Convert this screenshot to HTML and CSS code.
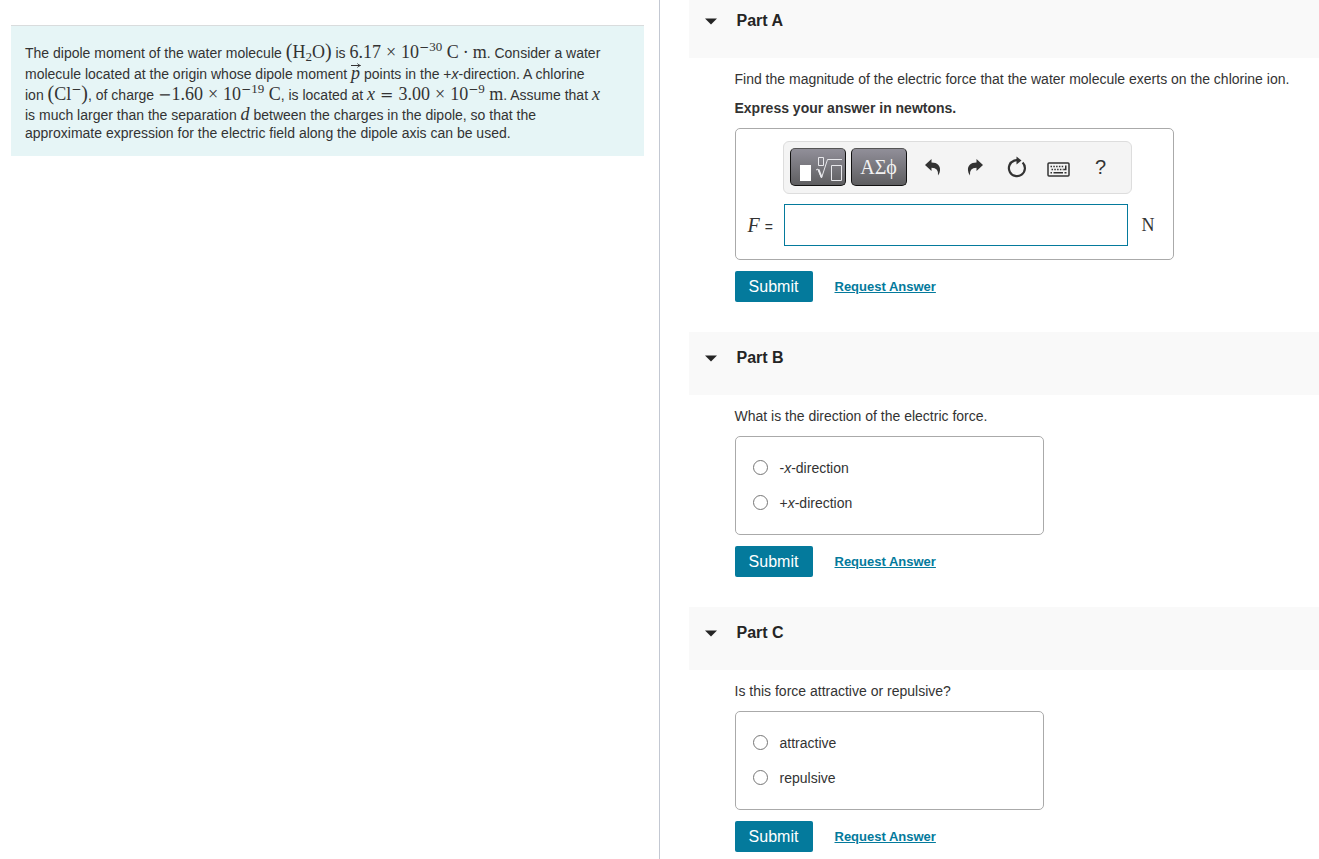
FILE: index.html
```html
<!DOCTYPE html>
<html lang="en">
<head>
<meta charset="utf-8">
<title>Dipole Moment of Water</title>
<link rel="stylesheet" href="styles.css">
</head>
<body>
<div class="layout">
  <section class="intro-pane">
    <p class="problem">The dipole moment of the water molecule <span class="math"><span class="paren">(</span>H<sub>2</sub>O<span class="paren">)</span></span> is <span class="math">6.17<span class="op">×</span>10<sup><span class="neg">−</span>30</sup> C<span class="dot">·</span>m</span>. Consider a water<br>
    molecule located at the origin whose dipole moment <span class="math vec"><i>p</i><svg class="arrow" viewBox="0 0 10 5" aria-hidden="true"><path d="M0 2.5H9M6.5 0.5Q7.5 2.3 9.5 2.5Q7.5 2.7 6.5 4.5"/></svg></span> points in the +<i>x</i>-direction. A chlorine<br>
    ion <span class="math"><span class="paren">(</span>Cl<sup><span class="neg">−</span></sup><span class="paren">)</span></span>, of charge <span class="math"><span class="neg">−</span>1.60<span class="op">×</span>10<sup><span class="neg">−</span>19</sup> C</span>, is located at <span class="math"><i>x</i><span class="op wide">=</span>3.00<span class="op">×</span>10<sup><span class="neg">−</span>9</sup> m</span>. Assume that <span class="math"><i>x</i></span><br>
    is much larger than the separation <span class="math small-line"><i>d</i></span> between the charges in the dipole, so that the<br>
    approximate expression for the electric field along the dipole axis can be used.</p>
  </section>
  <main class="parts">
    <section class="part">
      <header class="part-head"><svg class="caret" viewBox="0 0 12 7" aria-hidden="true"><path d="M0 0.5H12L6 6.5Z"/></svg><h2>Part A</h2></header>
      <div class="part-body">
        <p class="prompt">Find the magnitude of the electric force that the water molecule exerts on the chlorine ion.</p>
        <p class="prompt strong">Express your answer in newtons.</p>
        <div class="box answer">
          <div class="toolbar">
            <button class="tool dark" type="button" aria-label="Templates"><svg width="50" height="28" viewBox="0 0 50 28"><path d="M7 12h11v16H7z" fill="#fff"/><g fill="none" stroke="#e8e8ec"><path d="M25.500 4.500h5v8h-5zM38.500 12.500h10v15h-10z"/><path d="M23 17l2-1 3.500 9L34.500 6.500H49"/><path d="M25.500 16.500l3 7.500" stroke-width="2"/></g></svg></button>
            <button class="tool dark greek" type="button">ΑΣϕ</button>
            <div class="icons">
              <button class="tool" type="button" aria-label="Undo"><svg width="18" height="18" viewBox="0 0 18 18"><path d="M1 7L7.500 1V4.500C13.500 4.500 16.500 8 16 12.500Q15.800 15.500 14 17.500Q15 10 7.500 9.800V13Z"/></svg></button>
              <button class="tool" type="button" aria-label="Redo"><svg width="18" height="18" viewBox="0 0 18 18"><path d="M17 7L10.500 1V4.500C4.500 4.500 1.500 8 2 12.500Q2.200 15.500 4 17.500Q3 10 10.500 9.800V13Z"/></svg></button>
              <button class="tool" type="button" aria-label="Reset"><svg width="20" height="22" viewBox="0 0 20 22"><path d="M15.600 6.500A8 8 0 1 1 7.200 4.600L11 3.800" fill="none" stroke="#333" stroke-width="2.200"/><path d="M9.500 0.500L14.500 4.500L9.500 8.500Z"/></svg></button>
              <button class="tool" type="button" aria-label="Keyboard shortcuts"><svg class="keyboard" width="23" height="15" viewBox="0 0 23 15"><rect x="1" y="1" width="21" height="13" rx="1" fill="none" stroke="#333" stroke-width="1.500"/><path d="M3.500 4.500h14M4.500 7.500h12" fill="none" stroke="#333" stroke-width="1.500" stroke-dasharray="1.500 1.300"/><path d="M18 3.500h1.500V8.200H16.500V6.800H18ZM3.500 10h1.500v1.500H3.500zM6.500 10h9.500v1.500H6.500zM17.500 10h2v1.500h-2z"/></svg></button>
              <button class="tool help" type="button" aria-label="Help">?</button>
            </div>
          </div>
          <div class="entry">
            <label for="force"><i>F</i> <span class="eq">=</span></label>
            <input id="force" class="field" type="text">
            <span class="unit">N</span>
          </div>
        </div>
        <div class="actions"><button class="submit" type="button">Submit</button><a href="#">Request Answer</a></div>
      </div>
    </section>
    <section class="part">
      <header class="part-head"><svg class="caret" viewBox="0 0 12 7" aria-hidden="true"><path d="M0 0.5H12L6 6.5Z"/></svg><h2>Part B</h2></header>
      <div class="part-body">
        <p class="prompt">What is the direction of the electric force.</p>
        <div class="box choices">
          <label class="choice"><input type="radio" name="direction"><span>-<i>x</i>-direction</span></label>
          <label class="choice"><input type="radio" name="direction"><span>+<i>x</i>-direction</span></label>
        </div>
        <div class="actions"><button class="submit" type="button">Submit</button><a href="#">Request Answer</a></div>
      </div>
    </section>
    <section class="part">
      <header class="part-head"><svg class="caret" viewBox="0 0 12 7" aria-hidden="true"><path d="M0 0.5H12L6 6.5Z"/></svg><h2>Part C</h2></header>
      <div class="part-body">
        <p class="prompt">Is this force attractive or repulsive?</p>
        <div class="box choices">
          <label class="choice"><input type="radio" name="kind"><span>attractive</span></label>
          <label class="choice"><input type="radio" name="kind"><span>repulsive</span></label>
        </div>
        <div class="actions"><button class="submit" type="button">Submit</button><a href="#">Request Answer</a></div>
      </div>
    </section>
  </main>
</div>
</body>
</html>
```
FILE: styles.css
```css
* { box-sizing: border-box; }

body {
  margin: 0;
  background: #fff;
  color: #333;
  font: 14px/18px "Liberation Sans", Arial, sans-serif;
}

h2, p { margin: 0; }

.layout {
  display: grid;
  grid-template-columns: 1fr 1fr;
  min-height: 100vh;
}

.intro-pane {
  padding: 25px 15px 0 11px;
  border-right: 1px solid #c3c8d2;
}

.problem {
  padding: 16px 10px 14px 14px;
  border-top: 1px solid #d9dcdd;
  background: #e6f5f6;
}

/* Inline formulas */
.math {
  font-family: "Liberation Serif", "Times New Roman", serif;
  font-size: 18px;
  line-height: 21px;
  white-space: nowrap;
}
.small-line { line-height: 18px; }
.math sup, .math sub { font-size: 13px; line-height: 0; }
.math sup { vertical-align: 7px; }
.math sub { vertical-align: -3px; }
.paren { font-size: 20px; line-height: 0; }
.op { margin: 0 5px; }
.wide, .neg { font-family: "DejaVu Serif", serif; font-size: 16px; line-height: 0; }
.math sup .neg { font-size: 12px; }
.dot { margin: 0 4px; }
.vec { position: relative; }
.arrow {
  position: absolute;
  left: 0;
  top: 0;
  width: 10px;
  height: 5px;
  fill: none;
  stroke: #333;
}

/* Question parts */
.parts { padding-left: 29px; min-width: 0; }

.part-head {
  display: flex;
  align-items: center;
  gap: 20px;
  padding: 16px 16px 27px;
  background: #f9f9f9;
}
.part:first-child .part-head { padding-top: 11px; }
.part-head h2 { font-size: 16px; line-height: 20px; color: #252525; }
.caret { width: 12px; height: 7px; fill: #252525; }

.part-body { padding: 12px 0 30px 46px; }
.prompt { margin-bottom: 11px; }
.strong { font-weight: bold; }

.box {
  border: 1px solid #aaa;
  border-radius: 5px;
}

.answer { width: 439px; max-width: 100%; padding: 12px 0 13px; }

.toolbar {
  display: flex;
  align-items: center;
  width: 349px;
  margin: 0 0 10px 47px;
  padding: 6px 6px 7px;
  border: 1px solid #ddd;
  border-radius: 6px;
  background: #f4f4f4;
}
.tool {
  display: flex;
  align-items: center;
  justify-content: center;
  width: 42px;
  height: 38px;
  padding: 0;
  border: 0;
  background: none;
  color: #333;
  fill: #333;
}
.dark {
  width: 56px;
  margin-right: 5px;
  border: 1px solid #111;
  border-top-color: #555;
  border-radius: 5px;
  background: linear-gradient(#918f99, #5e5e60);
  color: #f2f2f2;
}
.dark svg { flex: none; }
.greek { font: 20px/24px "Liberation Serif", "DejaVu Serif", serif; }
.icons { display: flex; }
.keyboard { margin-top: 5px; }
.help { font: 20px/24px "Liberation Sans", Arial, sans-serif; }

.entry { display: flex; align-items: center; }
.entry label {
  width: 48px;
  padding-left: 12px;
  font: 20px/24px "Liberation Serif", "Times New Roman", serif;
}
.eq { font: 14px/18px "Liberation Sans", Arial, sans-serif; }
.field {
  width: 344px;
  height: 42px;
  padding: 4px 8px;
  border: 1px solid #047a9c;
  background: #fff;
  font: 18px/24px "Liberation Serif", serif;
}
.unit {
  margin-left: 14px;
  font: 18px/24px "Liberation Serif", "Times New Roman", serif;
}

.choices { width: 309px; max-width: 100%; padding: 13px 17px 14px; }
.choice { display: flex; align-items: center; gap: 12px; height: 35px; }
.choice input {
  appearance: none;
  width: 15px;
  height: 15px;
  margin: 0;
  border: 1px solid #767676;
  border-radius: 50%;
  background: #fff;
}
.choice input:checked { border: 4px solid #047a9c; }

.actions { display: flex; align-items: center; gap: 22px; margin-top: 11px; }
.submit {
  min-width: 78px;
  height: 31px;
  padding: 0 14px;
  border: 0;
  border-radius: 2px;
  background: #047a9c;
  color: #fff;
  font: 16px/20px "Liberation Sans", Arial, sans-serif;
}
.actions a { color: #047a9c; font-size: 13px; font-weight: bold; }
```
